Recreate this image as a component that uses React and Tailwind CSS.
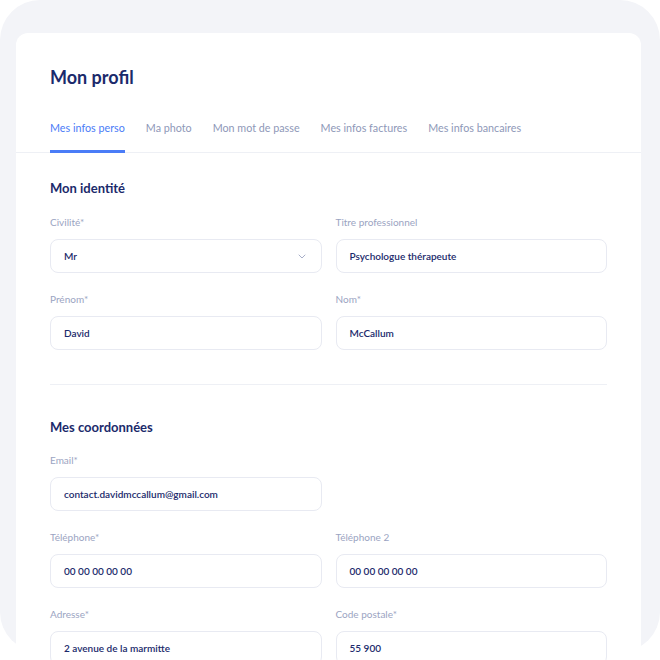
const TABS = ['Mes infos perso', 'Ma photo', 'Mon mot de passe', 'Mes infos factures', 'Mes infos bancaires'];

function Chevron() {
  return (
    <svg width="8" height="5" viewBox="0 0 8 5" fill="none" className="shrink-0 mr-[3px]">
      <path d="M1 1l3 3 3-3" stroke="#a7aec8" strokeWidth="1" strokeLinecap="round" strokeLinejoin="round" />
    </svg>
  );
}

function Field({ label, value, select = false }) {
  return (
    <div className="flex flex-col gap-[10px]">
      <span className="text-[10px] leading-[14px] text-[#9ba4c2]">{label}</span>
      <div className="h-[34px] flex items-center justify-between pl-[13px] pr-[12px] rounded-[8px] border border-[#e8eaf2] bg-white">
        <span className="text-[10px] font-semibold text-[#1b2a6b]">{value}</span>
        {select && <Chevron />}
      </div>
    </div>
  );
}

function SectionTitle({ children }) {
  return <h2 className="text-[13px] leading-5 font-bold text-[#1b2a6b]">{children}</h2>;
}

export default function App() {
  return (
    <div className="w-[660px] h-[660px] bg-white font-['Lato',sans-serif] overflow-hidden">
      <div className="h-[652px] bg-[#f3f4f8] rounded-[40px] pt-[33px] pl-[16px] pr-[19px]">
        <div className="bg-white rounded-t-[12px] min-h-[700px] pt-8">
          <h1 className="px-[34px] text-[18px] leading-6 font-bold text-[#1b2a6b]">Mon profil</h1>

          <div className="mt-[31px] flex gap-[21px] px-[34px] border-b border-[#eef0f5]">
            {TABS.map((t, i) => (
              <div
                key={t}
                className={
                  i === 0
                    ? 'pb-[14px] -mb-px text-[10.75px] leading-4 text-[#4a7cf7] border-b-[3px] border-[#4a7cf7]'
                    : 'pb-[17px] -mb-px text-[10.75px] leading-4 text-[#8e98b8]'
                }
              >
                {t}
              </div>
            ))}
          </div>

          <div className="px-[34px] pt-[25px]">
            <SectionTitle>Mon identité</SectionTitle>
            <div className="mt-[17px] grid grid-cols-2 gap-x-[14px] gap-y-[19px]">
              <Field label="Civilité*" value="Mr" select />
              <Field label="Titre professionnel" value="Psychologue thérapeute" />
              <Field label="Prénom*" value="David" />
              <Field label="Nom*" value="McCallum" />
            </div>

            <div className="mt-[34px] border-t border-[#eef0f5]" />

            <div className="pt-[32px]">
              <SectionTitle>Mes coordonnées</SectionTitle>
              <div className="mt-[16px] grid grid-cols-2 gap-x-[14px] gap-y-[19px]">
                <Field label="Email*" value="contact.davidmccallum@gmail.com" />
                <div />
                <Field label="Téléphone*" value="00 00 00 00 00" />
                <Field label="Téléphone 2" value="00 00 00 00 00" />
                <Field label="Adresse*" value="2 avenue de la marmitte" />
                <Field label="Code postale*" value="55 900" />
              </div>
            </div>
          </div>
        </div>
      </div>
    </div>
  );
}
